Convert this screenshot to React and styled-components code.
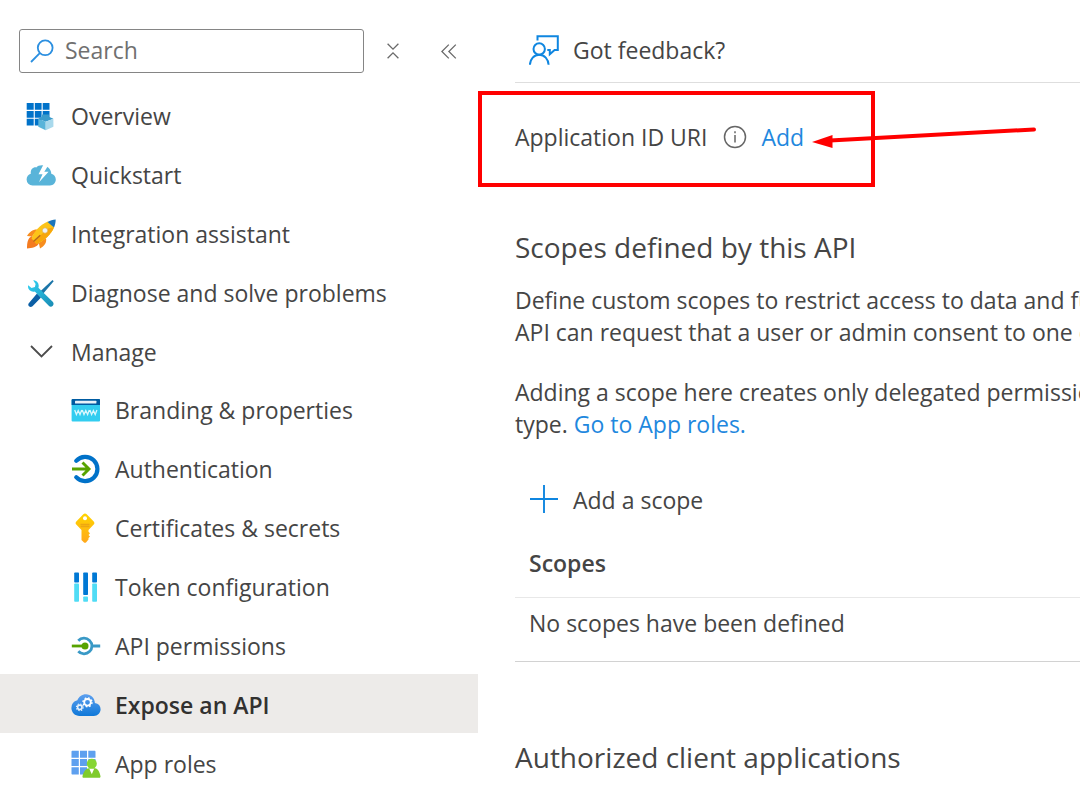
import styled, { createGlobalStyle } from "styled-components";

const GlobalStyle = createGlobalStyle`
  * {
    box-sizing: border-box;
  }
  body {
    margin: 0;
    background: #fff;
    color: #454545;
    font-family: "Open Sans", "Noto Sans", sans-serif;
    font-size: 23px;
    line-height: 32px;
  }
  button, input {
    font: inherit;
    color: inherit;
  }
`;

const SearchIcon = () => (
  <svg width="24" height="24" viewBox="0 0 24 24" fill="none" stroke="#2b8fe0" strokeWidth="1.8">
    <circle cx="15.2" cy="8.8" r="7.4" />
    <path d="M9.8 14.2 1 23" />
  </svg>
);

const CollapseAllIcon = () => (
  <svg width="12" height="16" viewBox="0 0 12 16" fill="none" stroke="#6a6a6a" strokeWidth="1.3">
    <path d="M.6.8 6 6.2 11.4.8M.6 15.2 6 9.8l5.4 5.4" />
  </svg>
);

const HideMenuIcon = () => (
  <svg width="16" height="15" viewBox="0 0 16 15" fill="none" stroke="#6a6a6a" strokeWidth="1.3">
    <path d="M7.8.6.9 7.5l6.9 6.9M14.8.6 7.9 7.5l6.9 6.9" />
  </svg>
);

const OverviewIcon = () => (
  <svg width="30" height="30" viewBox="0 0 30 30">
    <path
      fill="#0072c9"
      d="M.7 2h7v6.800h-7zM8.800 2h6.800v6.800H8.800zM16.700 2h6.800v6.800h-6.800zM.7 9.900h7v6.800h-7zM8.800 9.900h6.800v6.800H8.800zM16.700 9.900h6.800v6.800h-6.800zM.7 17.800h7v6.800h-7zM8.800 17.800h6.800v6.800H8.800z"
    />
    <path fill="#3a9bcb" d="m12.300 17.800 3.600-2v-2.300h7v2.300l4.500 2-7.700 3z" />
    <path fill="#59b4d9" d="m12.300 17.800 7.400 3v8.500l-7.400-3.500z" />
    <path fill="#a9d9ec" d="m27.400 17.800-7.700 3v8.500l7.700-3.500z" />
  </svg>
);

const QuickstartIcon = () => (
  <svg width="30" height="30" viewBox="0 0 30 30">
    <path
      fill="#59b4d9"
      d="M6.500 25.500A6 6 0 0 1 .6 19.500c0-3 1.800-5.200 4.200-5.800C4.300 9.500 7 7 10.300 7.400c1-1.400 3.200-2.200 5.700-2.200 5 0 9.300 3.600 9.300 8.600 2.600.4 4.500 2.700 4.500 5.800 0 3.400-2.500 5.900-5.800 5.900z"
    />
    <path fill="#fff" d="m17.500 4.500-5 9.700h4l-3.500 8 9.600-10.500h-4.300L22.500 5z" />
  </svg>
);

const RocketIcon = () => (
  <svg width="30" height="30" viewBox="0 0 30 30">
    <path fill="#f78d1e" d="M12 10.500C7 10 3.800 12.500 1 17l5 .6zM20 19c1 4.500-1.500 8-6 10.500l-1.200-5.500z" />
    <path fill="#f47b20" d="M6 17c-4.500 2-5 7-5 12.500C6 29 11 28.500 13 24z" />
    <path fill="#fcc419" d="M5.500 19.500C8 12 15 5 22 2.500l6 5.700C26 14.500 18 22 10.500 25z" />
    <path fill="#f7a70b" d="m8 22.300 14-12.800 6-1.300C26 14.500 18 22 10.500 25z" />
    <path stroke="#b5651d" strokeWidth="1.400" d="m7.500 22.500 6.800-6.300" />
    <path fill="#1b75bb" d="M21.500 3C24 1.500 27 .5 29.700.5c0 2.800-.6 5.300-1.700 8z" />
    <circle cx="19" cy="11.500" r="2.700" fill="#eef4f9" stroke="#d9a441" strokeWidth=".6" />
  </svg>
);

const ToolsIcon = () => (
  <svg width="30" height="30" viewBox="0 0 30 30">
    <defs>
      <linearGradient id="wrench" x1="0" y1="0" x2="1" y2="1">
        <stop offset="0" stopColor="#32d4f5" />
        <stop offset="1" stopColor="#198ab3" />
      </linearGradient>
    </defs>
    <path fill="#1b75a8" d="m26.500 2 1.200 1.300L16 17l-3-2.500z" />
    <path fill="#0b5fa5" d="m11 15.500 4 4-8.500 8.800c-1.200 1-2.500 1-3.500 0s-1-2.300 0-3.300z" />
    <path
      fill="url(#wrench)"
      d="M7.200 2.300c2.800 0 5.400 2.100 5.500 5.300 0 .8 0 1.500-.3 2.200l14.300 14c1.100 1.200 1.200 3 .1 4-1.200 1.200-2.900 1.100-4 0l-14-14.300c-3.300.8-6.600-1.300-6.800-4.700 0-.7 0-1 .2-1.600l3.300 2.700 3.400-.9.700-3z"
    />
  </svg>
);

const ChevronIcon = () => (
  <svg width="30" height="30" viewBox="0 0 30 30" fill="none" stroke="#4c4c4c" strokeWidth="1.800">
    <path d="m5 9 10.500 10.400L26 9" />
  </svg>
);

const BrandingIcon = () => (
  <svg width="30" height="30" viewBox="0 0 30 30">
    <rect x=".6" y="4" width="28.400" height="22.500" rx="1" fill="#32cdf0" />
    <path fill="#005ba1" d="M1.500 4h26.600c.5 0 .9.400.9.900v5.200H.6V4.900c0-.5.400-.9.900-.9z" />
    <rect x="4" y="5.800" width="21.400" height="2.600" rx=".5" fill="#e8f1f9" />
    <path
      fill="none"
      stroke="#d9f7fd"
      strokeWidth="1.300"
      d="m3.700 15 1.700 4.500L7.200 15.600 9 19.500l1.700-4.500M11.300 15l1.700 4.500 1.800-3.900 1.800 3.900 1.700-4.500M18.900 15l1.700 4.500 1.800-3.900 1.800 3.900 1.700-4.500"
    />
  </svg>
);

const AuthIcon = () => (
  <svg width="30" height="30" viewBox="0 0 30 30" fill="none">
    <path stroke="#0072c9" strokeWidth="4.200" strokeLinecap="round" d="M5.200 6.800A12.200 12.200 0 1 1 5.200 23.200" />
    <path stroke="#57a300" strokeWidth="2.900" d="M1 15h17.500M11.500 8.500 18 15l-6.500 6.500" />
  </svg>
);

const KeyIcon = () => (
  <svg width="30" height="30" viewBox="0 0 30 30">
    <defs>
      <linearGradient id="key" x1="0" y1="0" x2="0" y2="1">
        <stop offset="0" stopColor="#ffd400" />
        <stop offset="1" stopColor="#ffa81c" />
      </linearGradient>
    </defs>
    <g transform="translate(-1 0)">
      <path
        fill="url(#key)"
        d="M13.300 1.200c1-1 2.400-1 3.400 0l7 7.200c.9 1 .9 2.300 0 3.200L18.500 17v1.800l1.500 1.500-1.500 1.600 1.500 1.500-1.500 1.500v1.500l-2.500 3c-.6.600-1.400.6-2 0l-2.500-2.500V17l-5.200-5.400c-.9-.9-.9-2.300 0-3.200z"
      />
      <circle cx="15" cy="5.300" r="2" fill="#fff" />
      <path stroke="#eda612" strokeWidth="1.300" d="M10.500 11.500h9M10.500 13.500h9" />
    </g>
  </svg>
);

const TokenIcon = () => (
  <svg width="30" height="30" viewBox="0 0 30 30">
    <g fill="#0078d4">
      <rect x="3.200" y=".5" width="4.800" height="10" rx=".8" />
      <rect x="12.200" y=".5" width="4.800" height="22.500" rx=".8" />
      <rect x="21.200" y=".5" width="4.800" height="10" rx=".8" />
    </g>
    <g fill="#50dcf5">
      <rect x="3.200" y="11.500" width="4.800" height="18.300" rx=".8" />
      <rect x="12.200" y="24.500" width="4.800" height="5.300" rx=".8" />
      <rect x="21.200" y="11.500" width="4.800" height="18.300" rx=".8" />
    </g>
  </svg>
);

const PermissionsIcon = () => (
  <svg width="30" height="30" viewBox="0 0 30 30" fill="none">
    <path stroke="#3999c6" strokeWidth="2.800" d="M7.300 9.800a7.800 7.800 0 1 1 0 10.400M22 15h7.200" />
    <path stroke="#57a300" strokeWidth="2.800" d="M.8 15H14" />
    <circle cx="14" cy="15" r="3.500" fill="#57a300" />
  </svg>
);

const CloudApiIcon = () => (
  <svg width="30" height="30" viewBox="0 0 30 30" fill="none">
    <defs>
      <linearGradient id="cloud" x1="0" y1="0" x2="0" y2="1">
        <stop offset="0" stopColor="#5ea0ef" />
        <stop offset="1" stopColor="#0f78d8" />
      </linearGradient>
    </defs>
    <path
      fill="url(#cloud)"
      d="M29.600 19.300a6.600 6.600 0 0 0-5.700-6.400C23.700 8 19.800 4.200 15 4.200c-4 0-7.300 2.500-8.600 6.100A8 8 0 0 0 .4 18c0 4.400 3.700 8 8.200 8h14.200c3.800 0 6.800-3 6.800-6.700z"
    />
    <circle cx="16.500" cy="12.300" r="3.300" stroke="#fff" strokeWidth="1.800" />
    <circle cx="16.500" cy="12.300" r="4.500" stroke="#fff" strokeWidth="1.400" strokeDasharray="1.700 1.834" />
    <circle cx="8.800" cy="17.300" r="2.200" stroke="#e6f1fc" strokeWidth="1.600" />
    <circle cx="8.800" cy="17.300" r="3.400" stroke="#e6f1fc" strokeWidth="1.100" strokeDasharray="1.400 1.270" />
  </svg>
);

const AppRolesIcon = () => (
  <svg width="30" height="30" viewBox="0 0 30 30">
    <path
      fill="#5ea0ef"
      d="M1.500 1.800h6.300v7H.5V2.800c0-.6.400-1 1-1zM9 1.800h7v7H9zM17.300 1.800h6.200c.6 0 1 .4 1 1v6h-7.200zM.5 10h7.300v7H.5zM9 10h7v7H9zM17.300 10h7.200v7h-7.200zM.5 18.300h7.300v7.200H1.500c-.6 0-1-.4-1-1zM9 18.300h7v7.200H9z"
    />
    <path fill="#7fcb2b" d="M12.500 28.800c-.8 0-1.200-.7-1-1.500 1-5 3.500-8.300 8.200-8.300h2.600c4.400 0 6.300 3.500 7.200 8.300.1.800-.3 1.500-1 1.500z" />
    <circle cx="20.800" cy="14.800" r="5" fill="#86d633" />
    <path fill="#fff" d="m18.300 19.800 2.500 5.500 2.400-5.500z" />
  </svg>
);

const FeedbackIcon = () => (
  <svg width="30" height="30" viewBox="0 0 30 30" fill="none" stroke="#0f86e0" strokeWidth="2">
    <path d="M8.500 5.500V1.300h20.300V15h-3.200l-4.800 4.200V15h-2.500" />
    <circle cx="10.200" cy="14" r="5.700" />
    <path d="M.9 29.800C1.200 24 5 19.700 10.200 19.700S19.300 24 19.600 29.800" />
  </svg>
);

const InfoIcon = () => (
  <svg width="24" height="24" viewBox="0 0 24 24" fill="none" stroke="#666" strokeWidth="1.500">
    <circle cx="12" cy="12" r="10.500" />
    <path d="M12 10v7.500M12 6.300v2" />
  </svg>
);

const PlusIcon = () => (
  <svg width="30" height="30" viewBox="0 0 30 30" stroke="#0f86e0" strokeWidth="1.900">
    <path d="M1 14h28M15 0v28" />
  </svg>
);

const navItems = [
  { label: "Overview", icon: <OverviewIcon /> },
  { label: "Quickstart", icon: <QuickstartIcon /> },
  { label: "Integration assistant", icon: <RocketIcon /> },
  { label: "Diagnose and solve problems", icon: <ToolsIcon /> },
];

const manageItems = [
  { label: "Branding & properties", icon: <BrandingIcon /> },
  { label: "Authentication", icon: <AuthIcon /> },
  { label: "Certificates & secrets", icon: <KeyIcon /> },
  { label: "Token configuration", icon: <TokenIcon /> },
  { label: "API permissions", icon: <PermissionsIcon /> },
  { label: "Expose an API", icon: <CloudApiIcon />, active: true },
  { label: "App roles", icon: <AppRolesIcon /> },
];

const App = () => {
  return (
    <Page>
      <GlobalStyle />
      <Sidebar>
        <SearchRow>
          <SearchBox>
            <SearchIcon />
            <SearchInput type="search" placeholder="Search" aria-label="Search" />
          </SearchBox>
          <IconButton type="button" aria-label="Collapse all">
            <CollapseAllIcon />
          </IconButton>
          <IconButton type="button" aria-label="Hide menu">
            <HideMenuIcon />
          </IconButton>
        </SearchRow>
        <nav>
          {navItems.map((item) => (
            <NavLink key={item.label} href="#">
              {item.icon}
              <span>{item.label}</span>
            </NavLink>
          ))}
          <GroupButton type="button" aria-expanded="true">
            <ChevronIcon />
            <span>Manage</span>
          </GroupButton>
          {manageItems.map((item) => (
            <NestedLink
              key={item.label}
              href="#"
              $active={item.active}
              aria-current={item.active ? "page" : undefined}
            >
              {item.icon}
              <span>{item.label}</span>
            </NestedLink>
          ))}
        </nav>
      </Sidebar>
      <Main>
        <Toolbar>
          <CommandButton type="button">
            <FeedbackIcon />
            <span>Got feedback?</span>
          </CommandButton>
        </Toolbar>
        <UriRow>
          <span>Application ID URI</span>
          <InfoIcon />
          <TextLink href="#">Add</TextLink>
          <Highlight />
          <Arrow width="226" height="22" viewBox="0 0 226 22">
            <path d="M18 13.500 222 2.500" stroke="red" strokeWidth="4" strokeLinecap="round" />
            <path d="M0 15 20.500 8v13z" fill="red" />
          </Arrow>
        </UriRow>
        <Section>
          <Title>Scopes defined by this API</Title>
          <Paragraph>
            Define custom scopes to restrict access to data and functionality
            <br />
            API can request that a user or admin consent to one or more
          </Paragraph>
          <Paragraph>
            Adding a scope here creates only delegated permissions.
            <br />
            type. <TextLink href="#">Go to App roles.</TextLink>
          </Paragraph>
          <Commands>
            <CommandButton type="button">
              <PlusIcon />
              <span>Add a scope</span>
            </CommandButton>
          </Commands>
          <Table>
            <thead>
              <tr>
                <th>Scopes</th>
              </tr>
            </thead>
            <tbody>
              <tr>
                <td>No scopes have been defined</td>
              </tr>
            </tbody>
          </Table>
        </Section>
        <Section>
          <Title>Authorized client applications</Title>
        </Section>
      </Main>
    </Page>
  );
};

const Page = styled.div`
  display: flex;
  height: 100vh;
  overflow: hidden;
`;

const Sidebar = styled.aside`
  flex: 0 0 478px;
  overflow: hidden;
`;

const IconButton = styled.button`
  display: flex;
  flex: none;
  align-items: center;
  justify-content: center;
  width: 28px;
  height: 28px;
  padding: 0;
  border: 0;
  background: none;
`;

const SearchRow = styled.div`
  display: flex;
  align-items: center;
  gap: 15px;
  padding: 29px 15px 11px 19px;
  ${IconButton} + ${IconButton} {
    margin-left: 13px;
  }
`;

const SearchBox = styled.label`
  display: flex;
  flex: 1;
  align-items: center;
  gap: 11px;
  min-width: 0;
  height: 44px;
  padding: 0 10px;
  border: 1px solid #858585;
  border-radius: 3px;
`;

const SearchInput = styled.input`
  flex: 1;
  min-width: 0;
  padding: 0 0 2px;
  border: 0;
  outline: 0;
  background: transparent;
  &::placeholder {
    color: #707070;
    opacity: 1;
  }
`;

const NavLink = styled.a`
  display: flex;
  align-items: center;
  gap: 15px;
  height: 59px;
  padding: 4px 0 0 26px;
  color: inherit;
  text-decoration: none;
`;

const NestedLink = styled(NavLink)`
  gap: 14px;
  padding: 2px 0 0 71px;
  background: ${(props) => (props.$active ? "#edebe9" : "transparent")};
  color: ${(props) => (props.$active ? "#323130" : "inherit")};
  font-weight: ${(props) => (props.$active ? 600 : 400)};
`;

const GroupButton = styled.button`
  display: flex;
  align-items: center;
  gap: 15px;
  width: 100%;
  height: 59px;
  padding: 4px 0 0 26px;
  border: 0;
  background: none;
`;

const Main = styled.main`
  flex: 1;
  min-width: 0;
  padding-left: 37px;
  overflow: hidden;
`;

const Toolbar = styled.div`
  display: flex;
  align-items: center;
  height: 83px;
  padding-top: 17px;
  border-bottom: 1px solid #dedede;
`;

const CommandButton = styled.button`
  display: flex;
  align-items: center;
  gap: 14px;
  padding: 0 14px;
  border: 0;
  background: none;
`;

const Commands = styled.div`
  display: flex;
  padding: 44px 0 19px;
`;

const UriRow = styled.div`
  position: relative;
  display: flex;
  align-items: center;
  gap: 15px;
  height: 96px;
  margin-top: 8px;
  padding-bottom: 4px;
`;

const TextLink = styled.a`
  color: #1f88de;
  text-decoration: none;
`;

const Highlight = styled.div`
  position: absolute;
  top: 0;
  left: -37px;
  width: 397px;
  height: 96px;
  border: 4px solid #f00;
  pointer-events: none;
`;

const Arrow = styled.svg`
  position: absolute;
  top: 36px;
  left: 297px;
  pointer-events: none;
`;

const Section = styled.section`
  padding-top: 40px;
  & + & {
    padding-top: 75px;
  }
`;

const Title = styled.h2`
  margin: 0 0 17px;
  font-size: 28px;
  font-weight: 400;
  line-height: 40px;
`;

const Paragraph = styled.p`
  margin: 0;
  white-space: nowrap;
  & + & {
    margin-top: 28px;
  }
`;

const Table = styled.table`
  width: 100%;
  border-collapse: collapse;
  text-align: left;
  th {
    height: 62px;
    padding: 0 14px 6px;
    border-bottom: 1px solid #e8e8e8;
    font-weight: 600;
  }
  td {
    height: 64px;
    padding: 0 14px 12px;
    border-bottom: 1px solid #d2d2d2;
  }
`;

export default App;
